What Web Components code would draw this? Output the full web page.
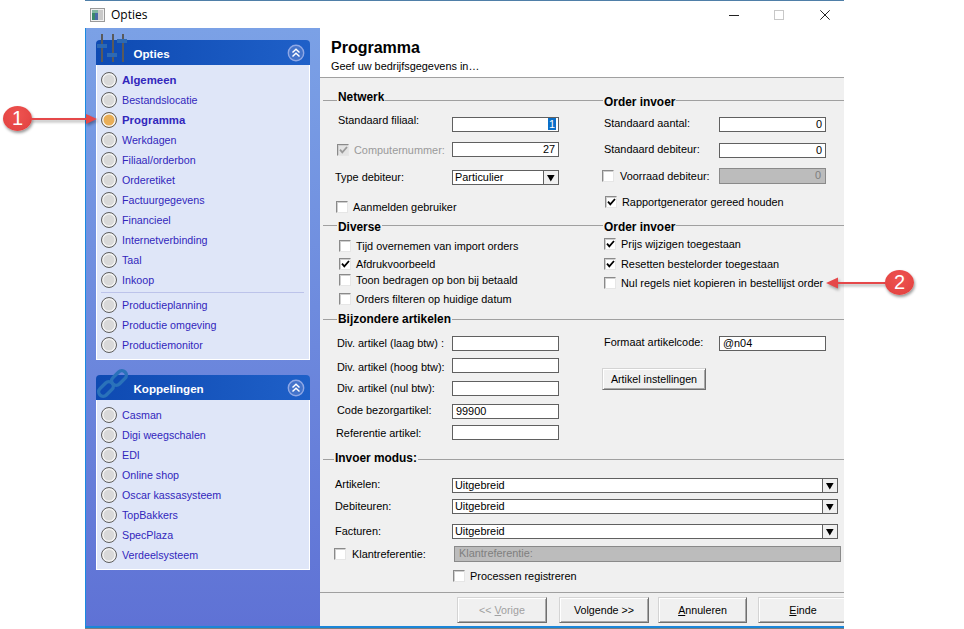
<!DOCTYPE html>
<html><head><meta charset="utf-8"><title>Opties</title>
<style>
html,body{margin:0;padding:0;background:#fff;overflow:hidden}
body{width:964px;height:629px;position:relative;font:11px "Liberation Sans",Arial,sans-serif;color:#000}
</style></head><body>
<x-window>
  <x-titlebar slot="title">Opties</x-titlebar>
  <x-sidebar slot="side">
    <x-panel title="Opties" icon="sliders">
      <x-nav bold>Algemeen</x-nav>
      <x-nav>Bestandslocatie</x-nav>
      <x-nav bold active>Programma</x-nav>
      <x-nav>Werkdagen</x-nav>
      <x-nav>Filiaal/orderbon</x-nav>
      <x-nav>Orderetiket</x-nav>
      <x-nav>Factuurgegevens</x-nav>
      <x-nav>Financieel</x-nav>
      <x-nav>Internetverbinding</x-nav>
      <x-nav>Taal</x-nav>
      <x-nav>Inkoop</x-nav>
      <x-sep></x-sep>
      <x-nav>Productieplanning</x-nav>
      <x-nav>Productie omgeving</x-nav>
      <x-nav>Productiemonitor</x-nav>
    </x-panel>
    <x-panel title="Koppelingen" icon="link">
      <x-nav>Casman</x-nav>
      <x-nav>Digi weegschalen</x-nav>
      <x-nav>EDI</x-nav>
      <x-nav>Online shop</x-nav>
      <x-nav>Oscar kassasysteem</x-nav>
      <x-nav>TopBakkers</x-nav>
      <x-nav>SpecPlaza</x-nav>
      <x-nav>Verdeelsysteem</x-nav>
    </x-panel>
  </x-sidebar>
  <x-pane slot="main">
    <x-band h="125">
      <x-col legend="Netwerk" lx="18" ly="-11">
        <x-field label="Standaard filiaal:" ind="18" lw="114" dy="-4" style="margin-top:16px"><x-input w="107" right value="1" sel></x-input></x-field>
        <x-field lw="132" style="margin-top:10px"><x-check slot="label" disabled checked style="margin-left:17px">Computernummer:</x-check><x-input w="107" right value="27"></x-input></x-field>
        <x-field label="Type debiteur:" ind="15" lw="117" style="margin-top:12px"><x-select w="107" value="Particulier"></x-select></x-field>
        <x-check style="margin:14px 0 0 16px">Aanmelden gebruiker</x-check>
      </x-col>
      <x-col legend="Order invoer" lx="20" ly="-6">
        <x-field label="Standaard aantal:" ind="20" lw="115" dy="-1" style="margin-top:16px"><x-input w="107" right value="0"></x-input></x-field>
        <x-field label="Standaard debiteur:" ind="20" lw="115" dy="-1" style="margin-top:11px"><x-input w="107" right value="0"></x-input></x-field>
        <x-field lw="135" style="margin-top:10px"><x-check slot="label" wide style="margin-left:18px">Voorraad debiteur:</x-check><x-input w="107" h="16" right off value="0"></x-input></x-field>
        <x-check checked style="margin:10px 0 0 21px">Rapportgenerator gereed houden</x-check>
      </x-col>
    </x-band>
    <x-band h="94">
      <x-col legend="Diverse" lx="18" ly="-6">
        <x-check style="margin:12px 0 0 19px">Tijd overnemen van import orders</x-check>
        <x-check checked style="margin:2px 0 0 19px">Afdrukvoorbeeld</x-check>
        <x-check style="margin:0 0 0 19px">Toon bedragen op bon bij betaald</x-check>
        <x-check style="margin:3px 0 0 19px">Orders filteren op huidige datum</x-check>
      </x-col>
      <x-col legend="Order invoer" lx="20" ly="-6">
        <x-check checked style="margin:10px 0 0 20px">Prijs wijzigen toegestaan</x-check>
        <x-check checked style="margin:4px 0 0 20px">Resetten bestelorder toegestaan</x-check>
        <x-check style="margin:3px 0 0 20px">Nul regels niet kopieren in bestellijst order</x-check>
      </x-col>
    </x-band>
    <x-band h="140">
      <x-col legend="Bijzondere artikelen" lx="18" ly="-8">
        <x-field label="Div. artikel (laag btw) :" ind="17" lw="115" style="margin-top:16px"><x-input w="107"></x-input></x-field>
        <x-field label="Div. artikel (hoog btw):" ind="17" lw="115" dy="2" style="margin-top:7px"><x-input w="107"></x-input></x-field>
        <x-field label="Div. artikel (nul btw):" ind="17" lw="115" style="margin-top:8px"><x-input w="107"></x-input></x-field>
        <x-field label="Code bezorgartikel:" ind="17" lw="115" dy="-1" style="margin-top:8px"><x-input w="107" value="99900"></x-input></x-field>
        <x-field label="Referentie artikel:" ind="16" lw="116" dy="1" style="margin-top:6px"><x-input w="107"></x-input></x-field>
      </x-col>
      <x-col>
        <x-field label="Formaat artikelcode:" ind="20" lw="115" dy="-1" style="margin-top:16px"><x-input w="107" value="@n04"></x-input></x-field>
        <x-btn w="104" h="22" style="margin:17px 0 0 18px">Artikel instellingen</x-btn>
      </x-col>
    </x-band>
    <x-band h="133">
      <x-col full legend="Invoer modus:" lx="15" ly="-9">
        <x-field label="Artikelen:" ind="15" lw="117" dy="-1" style="margin-top:18px"><x-select w="386" value="Uitgebreid"></x-select></x-field>
        <x-field label="Debiteuren:" ind="15" lw="117" style="margin-top:6px"><x-select w="386" value="Uitgebreid"></x-select></x-field>
        <x-field label="Facturen:" ind="15" lw="117" style="margin-top:10px"><x-select w="386" value="Uitgebreid"></x-select></x-field>
        <x-field lw="134" style="margin-top:7px"><x-check slot="label" style="margin-left:14px" wide>Klantreferentie:</x-check><x-input w="387" h="16" off value="Klantreferentie:"></x-input></x-field>
        <x-check style="margin:6px 0 0 133px">Processen registreren</x-check>
      </x-col>
    </x-band>
    <x-footer>
      <x-btn w="90" h="26" off><span>&lt;&lt; <u>V</u>orige</span></x-btn>
      <x-btn w="90" h="26" style="margin-left:12px"><span>Volgende &gt;&gt;</span></x-btn>
      <x-btn w="89" h="26" style="margin-left:9px"><span><u>A</u>nnuleren</span></x-btn>
      <x-btn w="90" h="26" style="margin-left:11px"><span><u>E</u>inde</span></x-btn>
    </x-footer>
  </x-pane>
</x-window>
<x-callout n="1" dir="right" style="left:3px;top:106px"></x-callout>
<x-callout n="2" dir="left" style="left:826px;top:270px"></x-callout>
<script>
const def=(name,css,html,init)=>customElements.define(name,class extends HTMLElement{
  connectedCallback(){
    if(this.shadowRoot)return;
    const r=this.attachShadow({mode:'open'});
    r.innerHTML='<style>'+css+'</style>'+(typeof html==='function'?html(this):html);
    if(init)init(this,r);
  }
});
const esc=s=>String(s==null?'':s).replace(/&/g,'&amp;').replace(/</g,'&lt;');

def('x-window',`
:host{display:block;position:absolute;left:85px;top:0;width:759px;height:629px;box-sizing:border-box;border-top:1px solid #4f7fa8;overflow:hidden;background:#fff}
.t{height:27px}
.m{display:flex;height:598px;border-left:1px solid #1b8ae0;box-sizing:border-box}
.b{height:1.5px;background:#1b86d8}
.g{height:2px;background:#7d7d7d}
`,`<div class="t"><slot name="title"></slot></div><div class="m"><slot name="side"></slot><slot name="main"></slot></div><div class="b"></div><div class="g"></div>`);

def('x-titlebar',`
:host{display:flex;align-items:center;height:27px;font:12px "Open Sans","Noto Sans",sans-serif;color:#000;position:relative}
svg.i{margin:0 6px 0 5px;flex:none}
.sp{flex:1}
.c{display:flex;align-items:center;padding-right:14px}
.c svg{display:block}
`,`<svg class="i" width="15" height="14" viewBox="0 0 15 14"><rect x=".5" y=".5" width="14" height="13" fill="#f1f1f1" stroke="#9a9a9a"/><rect x="2" y="2" width="3" height="10" fill="#3a8a6a"/><rect x="5" y="2" width="3" height="10" fill="#4a6aa8"/><rect x="8" y="2" width="5" height="10" fill="#c9c9c9"/><rect x="2" y="2" width="6" height="3" fill="#7fb6a0"/></svg><slot></slot><span class="sp"></span>
<span class="c">
<svg width="10" height="10" viewBox="0 0 10 10" style="margin-right:35px"><path d="M0 5.5H10" stroke="#222"/></svg>
<svg width="10" height="10" viewBox="0 0 10 10" style="margin-right:36px"><rect x=".5" y=".5" width="9" height="9" fill="none" stroke="#c8c8c8"/></svg>
<svg width="10" height="10" viewBox="0 0 10 10"><path d="M.3.3L9.7 9.7M9.7.3L.3 9.7" stroke="#222" stroke-width="1"/></svg>
</span>`);

def('x-sidebar',`
:host{display:flex;flex-direction:column;gap:15px;width:234px;flex:none;box-sizing:border-box;padding:12px 10px 0;background:linear-gradient(#7ba1e6,#5f72d5)}
`,`<slot></slot>`);

const icons={
 sliders:`<svg class="ic" style="left:1px;top:-6px" width="31" height="29" viewBox="0 0 31 29"><g fill="#5a5a5a"><rect x="4" y="0" width="2" height="28"/><rect x="15" y="0" width="2" height="28"/><rect x="25" y="0" width="2" height="28"/></g><g fill="#2c69b4"><rect x="0" y="10" width="10" height="4"/><rect x="10" y="19" width="10" height="4"/><rect x="20" y="5" width="10" height="4"/></g></svg>`,
 link:`<svg class="ic" style="left:0;top:-8px" width="33" height="33" viewBox="0 0 33 33"><g fill="none" stroke="#2a72ba" stroke-width="3.4"><rect x="1.5" y="17.5" width="17" height="9" rx="4.5" transform="rotate(-45 10 22)"/><rect x="14.5" y="6.5" width="17" height="9" rx="4.5" transform="rotate(-45 23 11)"/></g></svg>`
};
def('x-panel',`
:host{display:block;width:214px}
.h{position:relative;height:25px;box-sizing:border-box;border-radius:4px 4px 0 0;background:linear-gradient(90deg,#0e4ab2,#1f60c8);color:#fff;font:bold 11.6px "Liberation Sans",Arial,sans-serif;line-height:25px;padding:1px 0 0 37.5px}
.ic{position:absolute;display:block}
.t{position:relative}
.b{background:#dfe6f8;box-sizing:border-box;border:1px solid #fff;border-top:0;padding:5px 0 4px}
.ch{position:absolute;left:191px;top:4px;display:block}
`,el=>`<div class="h">${icons[el.getAttribute('icon')]||''}<span class="t">${esc(el.getAttribute('title'))}</span><svg class="ch" width="18" height="18" viewBox="0 0 18 18"><circle cx="9" cy="9" r="7.7" fill="#4474cb" stroke="#8fa8e6" stroke-width="1.4"/><path d="M5.5 8.5L9 5.2l3.5 3.3M5.5 12.5L9 9.2l3.5 3.3" fill="none" stroke="#fff" stroke-width="1.5"/></svg></div><div class="b"><slot></slot></div>`);

def('x-nav',`
:host{display:flex;align-items:center;height:20px;padding-left:4px;color:#3226bc;font-size:10.7px;white-space:nowrap}
:host([bold]){font-weight:bold;font-size:11.4px}
.r{width:16px;height:16px;box-sizing:border-box;border-radius:50%;border:1.5px solid #5e5e5e;background:#d9d9d9;box-shadow:inset 0 0 0 1.5px #f4f4f4;margin-right:5px;flex:none}
:host([active]) .r{background:#e9ae58}
`,`<span class="r"></span><slot></slot>`);

def('x-sep',`:host{display:block;height:1px;margin:2px 5px 2px 4px;background:#bcc3ea}`,``);

def('x-pane',`
:host{display:flex;flex-direction:column;flex:1;min-width:0;background:#f0f0f0;overflow:hidden}
.h{height:50px;box-sizing:border-box;background:#fff;border-bottom:1px solid #a0a0a0;padding:10px 0 0 11px;color:#000}
.h b{display:block;font:bold 16px/20px "Liberation Sans",Arial,sans-serif}
.h span{display:block;font-size:10.9px;line-height:14px;margin-top:1px}
.s{height:22px;flex:none}
`,`<div class="h"><b>Programma</b><span>Geef uw bedrijfsgegevens in…</span></div><div class="s"></div><slot></slot>`);

def('x-band',`
:host{display:flex;box-sizing:border-box;flex:none;margin-left:3px;border-top:1px solid #a0a0a0}
`,`<slot></slot>`,el=>{el.style.height=el.getAttribute('h')+'px'});

def('x-col',`
:host{display:flex;flex-direction:column;align-items:flex-start;position:relative;width:261px;flex:none;margin-left:-3px}
:host(:not([full]):not(:first-child)){margin-left:0;width:260px}
:host(:first-child){width:264px}
:host([full]){width:524px}
.l{position:absolute;font-weight:bold;font-size:11.9px;line-height:14px;background:#f0f0f0;white-space:nowrap;color:#000;padding:0 1px}
`,el=>{const t=el.getAttribute('legend');return (t?`<span class="l" style="left:${+el.getAttribute('lx')-1}px;top:${+el.getAttribute('ly')}px">${esc(t)}</span>`:'')+'<slot></slot>'});

def('x-field',`
:host{display:flex;align-items:flex-start;flex:none}
.l{flex:none;box-sizing:border-box;line-height:15px;white-space:nowrap;font-size:10.9px;color:#000}
`,el=>{
  const lw=+el.getAttribute('lw'),ind=+(el.getAttribute('ind')||0),dy=+(el.getAttribute('dy')||0),t=el.getAttribute('label');
  return `<div class="l" style="width:${lw+ind}px;padding-left:${ind}px;margin-top:${dy}px;margin-bottom:${-dy}px">${t?esc(t):'<slot name="label"></slot>'}</div><slot></slot>`;
});

def('x-input',`
:host{display:block;flex:none;box-sizing:border-box;background:#fff;border:1px solid #606060;font-size:10.9px;line-height:13px;padding:0 3px;color:#000;overflow:hidden;white-space:nowrap}
:host([right]){text-align:right}
:host([off]){background:#bcbcbc;border-color:#8a8a8a;color:#7f7f7f;padding:0 4px}
.s{background:#0a6fc8;color:#fff;padding:0 1px;margin-right:-1px}
`,el=>{const v=esc(el.getAttribute('value'));return el.hasAttribute('sel')?`<span class="s">${v}</span>`:`<span>${v}</span>`},
el=>{el.style.width=el.getAttribute('w')+'px';el.style.height=(el.getAttribute('h')||15)+'px'});

def('x-select',`
:host{display:flex;flex:none;box-sizing:border-box;height:15px;background:#fff;border:1px solid #606060;font-size:10.9px;line-height:13px;color:#000}
.v{flex:1;padding-left:2px;white-space:nowrap;overflow:hidden}
.a{width:15px;flex:none;box-sizing:border-box;border-left:1px solid #606060;background:#f0f0f0;display:flex;align-items:center;justify-content:center}
svg{display:block}
`,el=>`<span class="v">${esc(el.getAttribute('value'))}</span><span class="a"><svg width="8" height="8" viewBox="0 0 8 8"><path d="M0 1H7.6L3.8 7.6Z" fill="#000"/></svg></span>`,
el=>{el.style.width=el.getAttribute('w')+'px'});

def('x-check',`
:host{display:flex;align-items:center;height:16px;white-space:nowrap;font-size:10.9px;color:#000;flex:none;line-height:15px}
.b{width:12px;height:12px;box-sizing:border-box;background:#fff;border:1px solid;border-color:#8a8a8a #e6e6e6 #e6e6e6 #8a8a8a;box-shadow:inset 1px 1px 0 #cfcfcf;margin-right:5px;flex:none;display:flex;align-items:center;justify-content:center}
:host([wide]) .b{margin-right:6px}
:host([disabled]){color:#9a9a9a}
:host([disabled]) .b{background:#e4e4e4}
svg{display:block}
`,el=>`<span class="b">${el.hasAttribute('checked')?`<svg width="9" height="8" viewBox="0 0 9 8"><path d="M1 3.7l2.3 2.6L8 1" fill="none" stroke="${el.hasAttribute('disabled')?'#9a9a9a':'#000'}" stroke-width="1.8"/></svg>`:''}</span><slot></slot>`);

def('x-btn',`
:host{display:flex;align-items:center;justify-content:center;flex:none;box-sizing:border-box;background:#f0f0f0;border:1px solid;border-color:#d4d4d4 #6f6f6f #6f6f6f #d4d4d4;box-shadow:inset 1px 1px 0 #fff,inset -1px -1px 0 #a8a8a8;font-size:10.7px;color:#000;white-space:nowrap}
:host([off]){color:#a0a0a0}
`,`<slot></slot>`,el=>{el.style.width=el.getAttribute('w')+'px';el.style.height=el.getAttribute('h')+'px'});

def('x-footer',`
:host{display:flex;flex:none;box-sizing:border-box;height:34px;border-top:1px solid #a0a0a0;padding:4px 0 0 137px;width:524px;overflow:hidden}
`,`<slot></slot>`);

def('x-callout',`
:host{position:absolute;display:flex;align-items:center;height:25px}
.n{width:29px;height:25px;flex:none;border-radius:50%;background:radial-gradient(circle at 50% 35%,#ef5350,#e0403f);box-shadow:1px 2px 3px rgba(0,0,0,.4);color:#fff;font:20px/25px "Liberation Sans",Arial,sans-serif;text-align:center;position:relative}
svg{display:block;flex:none;filter:drop-shadow(1px 2px 1.5px rgba(0,0,0,.35))}
`,el=>{
  const n=`<span class="n">${esc(el.getAttribute('n'))}</span>`;
  return el.getAttribute('dir')==='right'
   ?n+`<svg width="66" height="14" viewBox="0 0 66 14" style="margin-left:-1px"><path d="M0 6H55V2L66 7L55 12V8H0Z" fill="#e5484a"/></svg>`
   :`<svg width="60" height="14" viewBox="0 0 60 14" style="margin-right:-1px"><path d="M60 6H12V1.5L0 7L12 12.5V8H60Z" fill="#e5484a"/></svg>`+n;
});
</script>
</body></html>
